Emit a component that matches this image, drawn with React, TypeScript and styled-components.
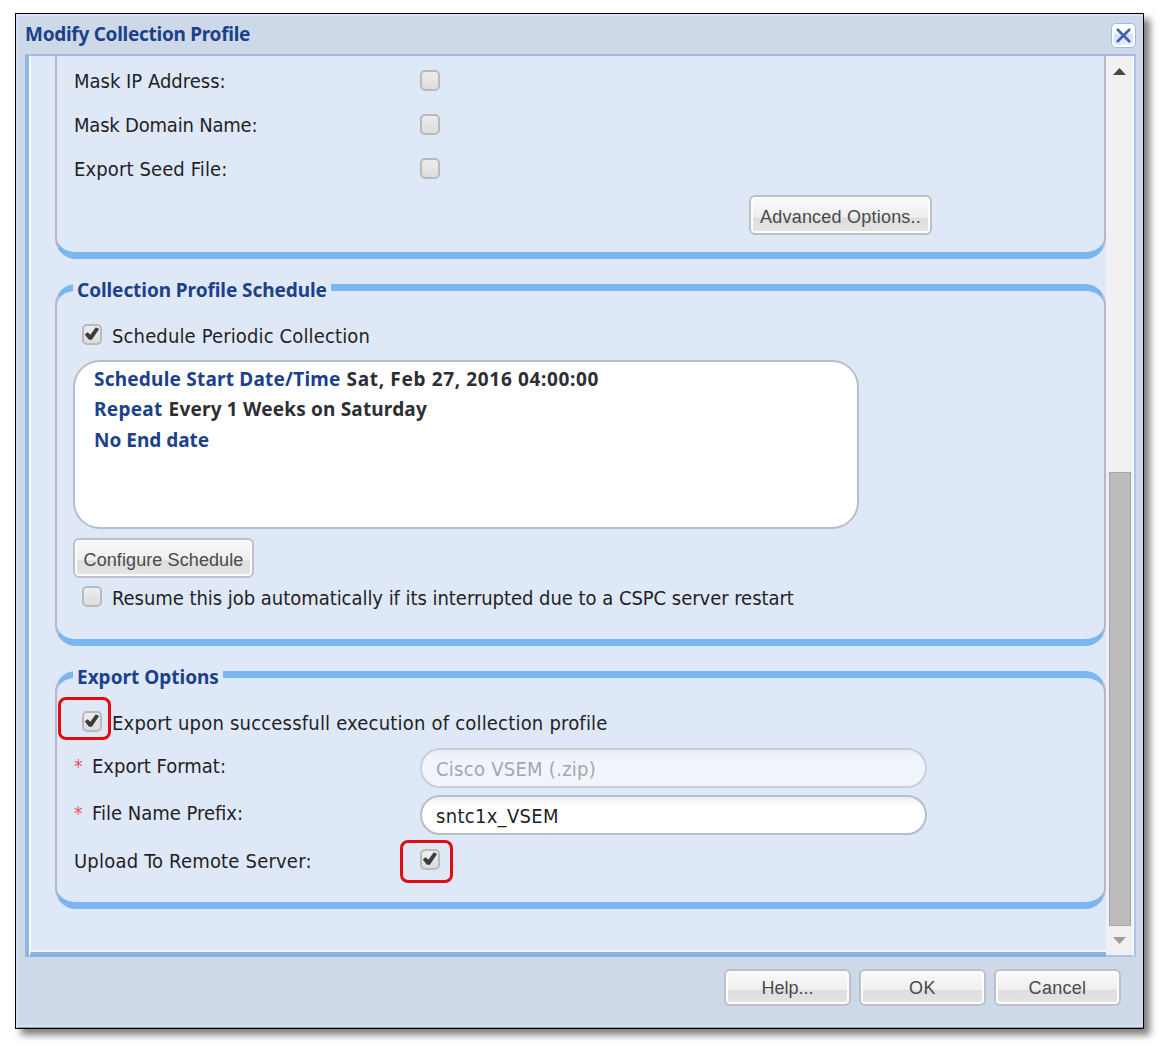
import React, { useState } from 'react';
import styled, { createGlobalStyle } from 'styled-components';

const GlobalStyle = createGlobalStyle`
  *, *::before, *::after { box-sizing: border-box; }
  body {
    margin: 0;
    background: #fff;
    color: #1f1f28;
    font: 20px/24px "DejaVu Sans Condensed", "DejaVu Sans", Tahoma, sans-serif;
    font-stretch: condensed;
  }
`;

const Page = styled.div`
  padding: 13px 21px 20px 15px;
  height: 1049px;
  overflow: hidden;
`;

const Window = styled.div`
  display: flex;
  flex-direction: column;
  height: 1016px;
  border: 1px solid #000;
  background: #cdd9e8;
  box-shadow: inset 0 2px 0 #d9e5f2, inset 2px 0 0 #d2e0f2, inset 0 -1px 0 #8f9aa8,
    inset 0 -3px 0 #d6e3f6, 6px 6px 7px rgba(0, 0, 0, 0.5);
`;

const TitleBar = styled.header`
  display: flex;
  align-items: center;
  justify-content: space-between;
  height: 40px;
  padding: 3px 7px 0 9px;
  & > :first-child { margin-top: -4px; }
`;

const Bold = styled.span<{ $ls?: number; $dark?: boolean }>`
  font: bold 19px/24px "Noto Sans", "Open Sans", sans-serif;
  letter-spacing: ${p => p.$ls ?? 0}px;
  color: ${p => (p.$dark ? '#2d2d33' : '#1c418b')};
  white-space: nowrap;
`;

const CloseButton = styled.button`
  display: grid;
  place-items: center;
  width: 25px;
  height: 25px;
  padding: 0;
  border: 1px solid #9dbbe6;
  border-radius: 5px;
  background: linear-gradient(#fff, #fff 35%, #cfe2fb 50%, #e6f2ff);
  box-shadow: inset 0 0 0 2px #fff;
`;

const Body = styled.div`
  display: flex;
  height: 903px;
  margin: 0 7px 0 9px;
  border: solid;
  border-color: #a3bbdd #a9c6ee #8db2e3 #8fb5e3;
  border-width: 2px 2px 0 4px;
`;

const Content = styled.div`
  display: flex;
  flex-direction: column;
  width: 1077px;
  padding-left: 24px;
  border-left: 2px solid #f6f9ff;
  border-bottom: 5px solid #8db0e3;
  background: #dfe8f6;
  box-shadow: inset 0 -2px 0 #f4f7fd;
`;

const Scrollbar = styled.div`
  display: flex;
  flex-direction: column;
  align-items: center;
  flex: 1;
  padding: 12px 0 11px;
  background: #f1f1f1;
  border: solid #fff;
  border-width: 0 1px 2px 0;
  border-bottom-color: #a9c6ee;
`;

const Arrow = styled.i<{ $down?: boolean }>`
  width: 13px;
  height: 7px;
  background: ${p => (p.$down ? '#9c9c9c' : '#484848')};
  clip-path: ${p => (p.$down ? 'polygon(0 0, 100% 0, 50% 100%)' : 'polygon(50% 0, 100% 100%, 0 100%)')};
`;

const Thumb = styled.div`
  width: 22px;
  height: 454px;
  margin: auto 0 11px;
  border: 1px solid #a5a5a5;
  background: #bcbcbc;
`;

const Section = styled.section<{ $h: number; $gap?: number; $open?: boolean }>`
  display: flex;
  flex-direction: column;
  align-items: flex-start;
  flex: none;
  width: 1051px;
  height: ${p => p.$h}px;
  margin-top: ${p => p.$gap ?? 0}px;
  padding: ${p => (p.$open ? 2 : 0)}px 0 0 16px;
  border: solid;
  border-color: #7ab6ef #b5b8c8;
  border-width: ${p => (p.$open ? 0 : 7)}px 2px 7px;
  border-radius: ${p => (p.$open ? '0 0 21px 21px' : '21px')};
`;

const Legend = styled.h2`
  display: flex;
  height: 24px;
  margin: -13px 0 0;
  padding: 0 4px;
  background: #dfe8f6;
`;

const Label = styled.span<{ $ls?: number }>`
  letter-spacing: ${p => p.$ls ?? 0}px;
  white-space: nowrap;
`;

const Field = styled.div<{ $h: number; $raised?: boolean; $top?: number }>`
  display: grid;
  grid-template-columns: 347px auto;
  align-items: center;
  height: ${p => p.$h}px;
  margin-top: ${p => p.$top ?? 0}px;
  & > :first-child {
    padding: ${p => (p.$raised ? '0 0 4px 1px' : '2px 0 0 1px')};
  }
`;

const Required = styled.span`
  display: inline-block;
  width: 18px;
  color: #f5515d;
  font-size: 19px;
`;

const CheckLine = styled.label<{ $top: number }>`
  display: flex;
  align-items: center;
  gap: 10px;
  height: 24px;
  margin: ${p => p.$top}px 0 0 9px;
  & > :last-child { padding-top: 4px; }
`;

const Box = styled.button`
  position: relative;
  flex: none;
  width: 20px;
  height: 21px;
  padding: 0;
  border: 2px solid #b9babd;
  border-radius: 5px;
  background: linear-gradient(#ededed, #dcdcdc);
  svg { position: absolute; left: -1px; top: -1px; }
`;

const Marker = styled.i<{ $x: number; $y: number }>`
  position: absolute;
  left: ${p => p.$x}px;
  top: ${p => p.$y}px;
  width: 53px;
  height: 43px;
  border: 3px solid #e00c12;
  border-radius: 8px;
  pointer-events: none;
`;

const Button = styled.button<{ $w: number; $ls?: number; $compact?: boolean }>`
  flex: none;
  width: ${p => p.$w}px;
  height: ${p => (p.$compact ? 37 : 40)}px;
  padding: ${p => (p.$compact ? 0 : 3)}px 0 0;
  border: 2px solid #bfc0c6;
  border-radius: 6px;
  background: linear-gradient(#f9f9f9, #efefef 56%, #dedede 58%, #e4e4e4);
  box-shadow: inset 0 0 0 2px #fdfdfd;
  color: #4a4a4a;
  font: 18px/20px "Liberation Sans", Arial, sans-serif;
  letter-spacing: ${p => p.$ls ?? 0}px;
  white-space: nowrap;
`;

const AdvancedRow = styled.div`
  margin: 5px 0 0 676px;
`;

const Summary = styled.div`
  display: flex;
  flex-direction: column;
  gap: 6.3px;
  width: 786px;
  height: 169px;
  margin: 14px 0 9px;
  padding: 5px 0 0 19px;
  border: 2px solid #b9bdcb;
  border-radius: 27px;
  background: #fff;
`;

const SummaryLine = styled.div`
  display: flex;
  gap: 6px;
  height: 24px;
`;

const Input = styled.input<{ $ls: number }>`
  width: 507px;
  height: 40px;
  padding: 3px 14px 0;
  border: 2px solid #b9bdcb;
  border-radius: 20px;
  background: linear-gradient(#ededed, #fff 8px);
  color: #1f1f28;
  font: inherit;
  letter-spacing: ${p => p.$ls}px;
  outline: 0;
  &:disabled {
    border-color: #c9cedb;
    background: linear-gradient(#e9edf4, #f1f5fb 8px);
    color: #a4a7ad;
  }
`;

const Footer = styled.footer`
  display: flex;
  justify-content: flex-end;
  gap: 8px;
  padding: 12px 22px 0;
`;

function Checkbox({ initial = false, marker }: { initial?: boolean; marker?: [number, number] }) {
  const [on, setOn] = useState(initial);
  return (
    <Box type="button" role="checkbox" aria-checked={on} onClick={() => setOn(!on)}>
      {on && (
        <svg width="18" height="18" viewBox="0 0 18 18">
          <path d="M1.8 9.6 4.6 7.3l2.8 2.5 5.4-7.6 3.3 1.9-7.2 10.6H6z" fill="#3c3c3c" />
        </svg>
      )}
      {marker && <Marker $x={marker[0]} $y={marker[1]} />}
    </Box>
  );
}

const maskFields: [string, number][] = [
  ['Mask IP Address:', 0],
  ['Mask Domain Name:', -0.2],
  ['Export Seed File:', 0.12],
];

export default function App() {
  return (
    <Page>
      <GlobalStyle />
      <Window>
        <TitleBar>
          <Bold $ls={-0.28}>Modify Collection Profile</Bold>
          <CloseButton aria-label="Close">
            <svg width="15" height="15" viewBox="0 0 15 15">
              <path d="M1 1 14 14M14 1 1 14" stroke="#4560a8" strokeWidth="2.6" />
            </svg>
          </CloseButton>
        </TitleBar>
        <Body>
          <Content>
            <Section $h={203} $open>
              {maskFields.map(([text, ls]) => (
                <Field key={text} $h={44}>
                  <Label $ls={ls}>{text}</Label>
                  <Checkbox />
                </Field>
              ))}
              <AdvancedRow>
                <Button $w={183} $ls={0.22}>Advanced Options..</Button>
              </AdvancedRow>
            </Section>

            <Section $h={362} $gap={25}>
              <Legend><Bold $ls={-0.07}>Collection Profile Schedule</Bold></Legend>
              <CheckLine $top={20}>
                <Checkbox initial />
                <Label $ls={0.14}>Schedule Periodic Collection</Label>
              </CheckLine>
              <Summary>
                <SummaryLine>
                  <Bold $ls={0.22}>Schedule Start Date/Time</Bold>
                  <Bold $dark $ls={0.65}>Sat, Feb 27, 2016 04:00:00</Bold>
                </SummaryLine>
                <SummaryLine>
                  <Bold $ls={0.3}>Repeat</Bold>
                  <Bold $dark $ls={0.18}>Every 1 Weeks on Saturday</Bold>
                </SummaryLine>
                <SummaryLine><Bold>No End date</Bold></SummaryLine>
              </Summary>
              <Button $w={181} $ls={0.1}>Configure Schedule</Button>
              <CheckLine $top={6}>
                <Checkbox />
                <Label $ls={-0.04}>Resume this job automatically if its interrupted due to a CSPC server restart</Label>
              </CheckLine>
            </Section>

            <Section $h={238} $gap={25}>
              <Legend><Bold>Export Options</Bold></Legend>
              <CheckLine $top={20}>
                <Checkbox initial marker={[-26, -16]} />
                <Label $ls={0.2}>Export upon successfull execution of collection profile</Label>
              </CheckLine>
              <Field $h={47} $raised $top={11}>
                <Label><Required>*</Required>Export Format:</Label>
                <Input disabled $ls={0.27} defaultValue="Cisco VSEM (.zip)" />
              </Field>
              <Field $h={47} $raised>
                <Label><Required>*</Required>File Name Prefix:</Label>
                <Input $ls={0.3} defaultValue="sntc1x_VSEM" />
              </Field>
              <Field $h={43}>
                <Label $ls={0.2}>Upload To Remote Server:</Label>
                <Checkbox initial marker={[-22, -11]} />
              </Field>
            </Section>
          </Content>
          <Scrollbar>
            <Arrow />
            <Thumb />
            <Arrow $down />
          </Scrollbar>
        </Body>
        <Footer>
          <Button $w={127} $compact>Help...</Button>
          <Button $w={127} $compact $ls={0.5}>OK</Button>
          <Button $w={127} $compact $ls={0.3}>Cancel</Button>
        </Footer>
      </Window>
    </Page>
  );
}
